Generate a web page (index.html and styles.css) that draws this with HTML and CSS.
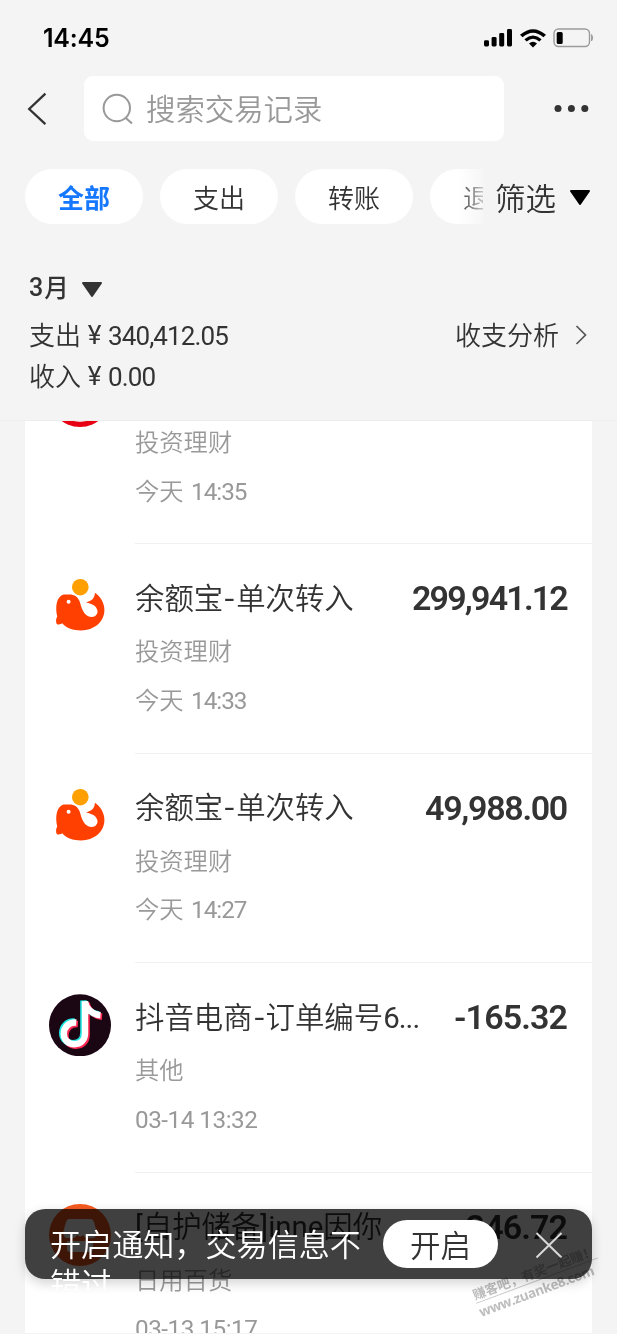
FILE: index.html
```html
<!DOCTYPE html>
<html lang="zh-CN">
<head>
<meta charset="utf-8">
<title>账单</title>
<link rel="stylesheet" href="styles.css">
</head>
<body>
<div class="screen">
  <header class="header">
    <div class="status">
      <span class="time">14:45</span>
      <svg class="signal" width="29" height="18" viewBox="0 0 29 18"><rect x="0" y="11.3" width="5" height="6.2" rx="1.4"/><rect x="7.6" y="8" width="5" height="9.5" rx="1.4"/><rect x="15.2" y="4" width="5" height="13.5" rx="1.4"/><rect x="23" y="0" width="5" height="17.5" rx="1.4"/></svg>
      <svg class="wifi" width="26" height="19" viewBox="0 0 24 19" preserveAspectRatio="none"><path d="M1.2 7.1Q12-3.1 22.8 7.1" fill="none" stroke="#000" stroke-width="3.5"/><path d="M5.1 11.3Q12 4.9 18.9 11.3" fill="none" stroke="#000" stroke-width="3.1"/><path d="M8.3 14.4Q12 11.2 15.7 14.4L12 18.4Z"/></svg>
      <svg class="battery" width="41" height="20" viewBox="0 0 41 20"><rect x="1" y="1" width="35.5" height="17.5" rx="4.5" fill="none" stroke="#9b9b9b" stroke-width="1.4"/><rect x="3.7" y="4" width="6" height="12" rx="1.6"/><path d="M38.6 6.5Q40.6 9.8 38.6 13Z" fill="#8e8e8e" stroke="#8e8e8e" stroke-width=".7"/></svg>
    </div>
    <div class="nav">
      <svg class="back" width="22" height="34" viewBox="0 0 22 34"><path d="M19.4 1.6L3.2 17L19.4 32.2" fill="none" stroke="#333" stroke-width="2.3"/></svg>
      <div class="search">
        <svg width="32" height="34" viewBox="0 0 32 34"><circle cx="14.8" cy="16" r="13.2" fill="none" stroke="#999" stroke-width="2"/><path d="M23.8 26L30 31.5" stroke="#999" stroke-width="2.2"/></svg>
        <span>搜索交易记录</span>
      </div>
      <svg class="more" width="36" height="8" viewBox="0 0 36 8" fill="#333"><circle cx="4" cy="3.6" r="3.5"/><circle cx="17.4" cy="3.6" r="3.5"/><circle cx="30.8" cy="3.6" r="3.5"/></svg>
    </div>
    <div class="filters">
      <div class="pills">
        <span class="pill active">全部</span>
        <span class="pill">支出</span>
        <span class="pill">转账</span>
        <span class="pill">退款</span>
      </div>
      <span class="filter">筛选</span>
      <svg class="caret" width="22" height="18" viewBox="0 0 22 18"><path d="M2 2H20L11 15Z" fill="#000" stroke="#000" stroke-width="2" stroke-linejoin="round"/></svg>
    </div>
    <div class="month"><b>3</b><span>月</span><svg width="22" height="18" viewBox="0 0 22 18"><path d="M2 2H20L11 15Z" fill="#333" stroke="#333" stroke-width="2" stroke-linejoin="round"/></svg></div>
    <div class="sum"><span class="cn">支出</span><i class="yen">¥</i><i class="num">340,412.05</i>
      <span class="analysis cn">收支分析</span><svg width="14" height="22" viewBox="0 0 14 22"><path d="M2.5 1L11.5 10L2.5 19" fill="none" stroke="#555" stroke-width="1.7"/></svg></div>
    <div class="sum"><span class="cn">收入</span><i class="yen">¥</i><i class="num">0.00</i></div>
  </header>

  <main class="list">
    <section class="row first">
      <div class="logo"><svg width="62" height="62" viewBox="0 0 62 62"><circle cx="31" cy="30" r="31" fill="#e70012"/><ellipse cx="31" cy="52.8" rx="9" ry="3" fill="#fff"/></svg></div>
      <div class="body"><div class="top"><span class="title">基金</span></div><div class="cat">投资理财</div><div class="date">今天 <i>14:35</i></div></div>
    </section>
    <section class="row">
      <div class="logo"><svg width="62" height="62" viewBox="0 0 62 62"><circle cx="31.3" cy="12.2" r="8.3" fill="#ffa000"/><path d="M7.7 49C6.6 46.5 7 43.5 8.2 41.5C6.5 34 6.8 24.5 12 20.8C14 19.3 15.5 19.2 17.5 19.6C24.5 18.6 28.7 21.4 30.5 26C32.5 31.5 33.5 40.8 42 42C46.5 42.4 49.2 38.8 48.4 35.3C47.5 31 43.5 28.7 37 27.4C42.5 26 45.7 23.8 45.9 17.8C51.5 21.5 55.4 28 55.4 35C55.4 47 45 55.4 32 55.4C24 55.4 17.5 53.3 13.2 48.3C11.8 49.4 9.5 50 7.7 49Z" fill="#ff4000"/><circle cx="19.6" cy="26.8" r="2" fill="#fff"/></svg></div>
      <div class="body"><div class="top"><span class="title">余额宝<i class="dash">-</i>单次转入</span><b class="amount long">299,941.12</b></div><div class="cat">投资理财</div><div class="date">今天 <i>14:33</i></div></div>
    </section>
    <section class="row">
      <div class="logo"><svg width="62" height="62" viewBox="0 0 62 62"><circle cx="31.3" cy="12.2" r="8.3" fill="#ffa000"/><path d="M7.7 49C6.6 46.5 7 43.5 8.2 41.5C6.5 34 6.8 24.5 12 20.8C14 19.3 15.5 19.2 17.5 19.6C24.5 18.6 28.7 21.4 30.5 26C32.5 31.5 33.5 40.8 42 42C46.5 42.4 49.2 38.8 48.4 35.3C47.5 31 43.5 28.7 37 27.4C42.5 26 45.7 23.8 45.9 17.8C51.5 21.5 55.4 28 55.4 35C55.4 47 45 55.4 32 55.4C24 55.4 17.5 53.3 13.2 48.3C11.8 49.4 9.5 50 7.7 49Z" fill="#ff4000"/><circle cx="19.6" cy="26.8" r="2" fill="#fff"/></svg></div>
      <div class="body"><div class="top"><span class="title">余额宝<i class="dash">-</i>单次转入</span><b class="amount mid">49,988.00</b></div><div class="cat">投资理财</div><div class="date">今天 <i>14:27</i></div></div>
    </section>
    <section class="row">
      <div class="logo"><svg width="62" height="62" viewBox="0 0 62 62"><circle cx="31" cy="31.3" r="31" fill="#1b0614"/><g fill="none" stroke-width="6.4"><path d="M27.3 28.5C19.5 28 14.8 33.5 14.8 39.8C14.8 46 19.5 50.2 25.5 50.2C31.5 50.2 36 46 36 39.5V7.3C36.5 14 43 20.5 51.5 21.3" stroke="#ff2852" transform="translate(1.6 1.5)"/><path d="M27.3 28.5C19.5 28 14.8 33.5 14.8 39.8C14.8 46 19.5 50.2 25.5 50.2C31.5 50.2 36 46 36 39.5V7.3C36.5 14 43 20.5 51.5 21.3" stroke="#20e5e3" transform="translate(-1.6 -.9)"/><path d="M27.3 28.5C19.5 28 14.8 33.5 14.8 39.8C14.8 46 19.5 50.2 25.5 50.2C31.5 50.2 36 46 36 39.5V7.3C36.5 14 43 20.5 51.5 21.3" stroke="#fff"/></g></svg></div>
      <div class="body"><div class="top"><span class="title">抖音电商<i class="dash">-</i>订单编号<i class="tail">6...</i></span><b class="amount">-165.32</b></div><div class="cat">其他</div><div class="date full"><i>03-14 13:32</i></div></div>
    </section>
    <section class="row">
      <div class="logo"><svg width="62" height="62" viewBox="0 0 62 62"><circle cx="31" cy="31" r="31" fill="#f45a1e"/><path d="M20 15H42Q44 15 45 18L48 29Q47 35 42 34Q36 35 34 31Q31 34 28 31Q26 35 20 34Q15 35 14 29L17 18Q18 15 20 15Z" fill="#fff"/><path d="M18 37H44V45Q44 48 41 48H21Q18 48 18 45Z" fill="#fff"/></svg></div>
      <div class="body"><div class="top"><span class="title"><i>[</i>自护储备<i>]inne</i>因你</span><b class="amount">-246.72</b></div><div class="cat">日用百货</div><div class="date full"><i>03-13 15:17</i></div></div>
    </section>
  </main>

  <div class="toast">
    <div class="message">开启通知，交易信息不错过</div>
    <button class="open">开启</button>
    <svg class="close" width="28" height="28" viewBox="0 0 28 28"><path d="M1.5 2L26.5 26.5M26.5 2L1.5 26.5" stroke="#d8d8d8" stroke-width="2"/></svg>
  </div>
  <div class="watermark"><div>赚客吧，有奖一起赚！</div><div class="site">www.zuanke8.com</div></div>
</div>
</body>
</html>
```
FILE: styles.css
```css
* { box-sizing: border-box; }
body { margin: 0; background: #f4f4f4; color: #333; font-family: "Noto Sans CJK SC", sans-serif; }
i { font-style: normal; }
svg { display: block; flex: none; }
.screen { position: relative; width: 617px; height: 1334px; overflow: hidden; display: flex; flex-direction: column; }
.header { height: 421px; flex: none; border-bottom: 1px solid #ededed; }
.status { height: 76px; padding: 0 23px 0 43px; display: flex; align-items: center; }
.time { flex: 1; font: 600 25px/28px Inter, sans-serif; letter-spacing: -.2px; color: #000; }
.wifi { margin-left: 7px; }
.battery { margin-left: 7px; }
.nav { height: 65px; display: flex; align-items: center; padding: 0 27px 0 26px; }
.search { margin-left: 36px; width: 420px; height: 65px; border-radius: 9px; background: #fff; display: flex; align-items: center; gap: 12px; padding-left: 18px; font-size: 29.4px; line-height: 40px; font-weight: 350; color: #999; }
.search span { margin-top: -4px; }
.more { margin-left: auto; }
.filters { height: 55px; margin: 28px 0 0 25px; display: flex; align-items: center; }
.pills { display: flex; gap: 17px; width: 458px; overflow: hidden; -webkit-mask-image: linear-gradient(90deg, #000 432px, transparent 466px); mask-image: linear-gradient(90deg, #000 432px, transparent 466px); }
.pill { flex: none; width: 118px; height: 55px; border-radius: 28px; background: #fff; text-align: center; font-size: 26px; line-height: 55px; font-weight: 350; }
.active { color: #1677ff; font-weight: 600; }
.filter { margin-left: 12px; font-size: 30.5px; line-height: 40px; font-weight: 350; }
.caret { margin: 3px 0 0 13px; }
.month { height: 40px; margin: 44px 0 0 29px; display: flex; align-items: center; font-size: 24.5px; font-weight: 500; }
.month span { margin-top: -3px; }
.month b { font: 500 25px/30px Roboto, sans-serif; margin-right: 1px; }
.month svg { margin: 4px 0 0 12px; }
.sum { height: 41px; line-height: 41px; padding: 0 29px; display: flex; align-items: center; font-size: 26px; }
.month + .sum { margin-top: 7px; }
.cn { font-weight: 350; position: relative; top: -2px; }
.sum .yen, .sum .num { font-family: Roboto, sans-serif; }
.yen { width: 27px; text-align: center; }
.num { letter-spacing: -.9px; padding-top: 1px; }
.analysis { margin-left: auto; }
.sum svg { margin-left: 15px; }
.list { width: 567px; margin-left: 25px; height: 912px; background: #fff; overflow: hidden; }
.row { height: 209.4px; display: flex; }
.first { margin-top: -86px; }
.logo { width: 62px; margin: 31px 24px 0; }
.body { flex: 1; padding-top: 31px; border-bottom: 1px solid #f0f0f0; }
.top { height: 44px; padding-right: 25px; display: flex; justify-content: space-between; align-items: center; font-size: 29.4px; line-height: 44px; white-space: nowrap; }
.title { font-weight: 350; }
.title i { font-family: Roboto, sans-serif; font-weight: 400; }
.title .dash { display: inline-block; width: 13px; text-align: center; transform: scaleX(1.2); }
.title .tail { letter-spacing: -.9px; }
.amount { font: 600 34px/44px Roboto, sans-serif; letter-spacing: -.9px; margin-top: 2px; }
.long { letter-spacing: -1.8px; }
.mid { letter-spacing: -1.3px; }
.cat, .date { height: 36px; font-size: 24.3px; line-height: 36px; color: #999; font-weight: 350; }
.cat { margin-top: 13px; }
.date { margin-top: 12.5px; }
.date i { font-family: Roboto, sans-serif; font-weight: 400; letter-spacing: -1px; margin-left: 2px; }
.full i { letter-spacing: -.5px; margin-left: 0; }
.toast { position: absolute; left: 25px; top: 1209px; width: 567px; height: 70px; border-radius: 20px; background: rgba(0,0,0,.75); box-shadow: 0 4px 12px rgba(0,0,0,.18); display: flex; align-items: flex-start; padding: 0 29px 0 25px; }
.message { width: 321px; height: 81px; overflow: hidden; padding-top: 14px; font-size: 31.1px; line-height: 39px; font-weight: 350; color: #fff; word-break: break-all; }
.open { flex: none; width: 115px; height: 48px; margin: 11px 0 0 12px; padding: 0; border: 0; border-radius: 24px; background: #fff; color: #333; font: 350 30.5px/46px "Noto Sans CJK SC", sans-serif; }
.close { margin: 22px 0 0 auto; }
.watermark { position: absolute; left: 470px; top: 1287px; width: 130px; transform: rotate(-20.5deg); transform-origin: 0 0; mix-blend-mode: multiply; color: #bdbdbd; font: 700 13px/17px "Noto Sans CJK SC", sans-serif; white-space: nowrap; }
.site { border-top: 1px solid #c8c8c8; font: 700 13.5px/19px "Open Sans", sans-serif; letter-spacing: -.4px; }
```
